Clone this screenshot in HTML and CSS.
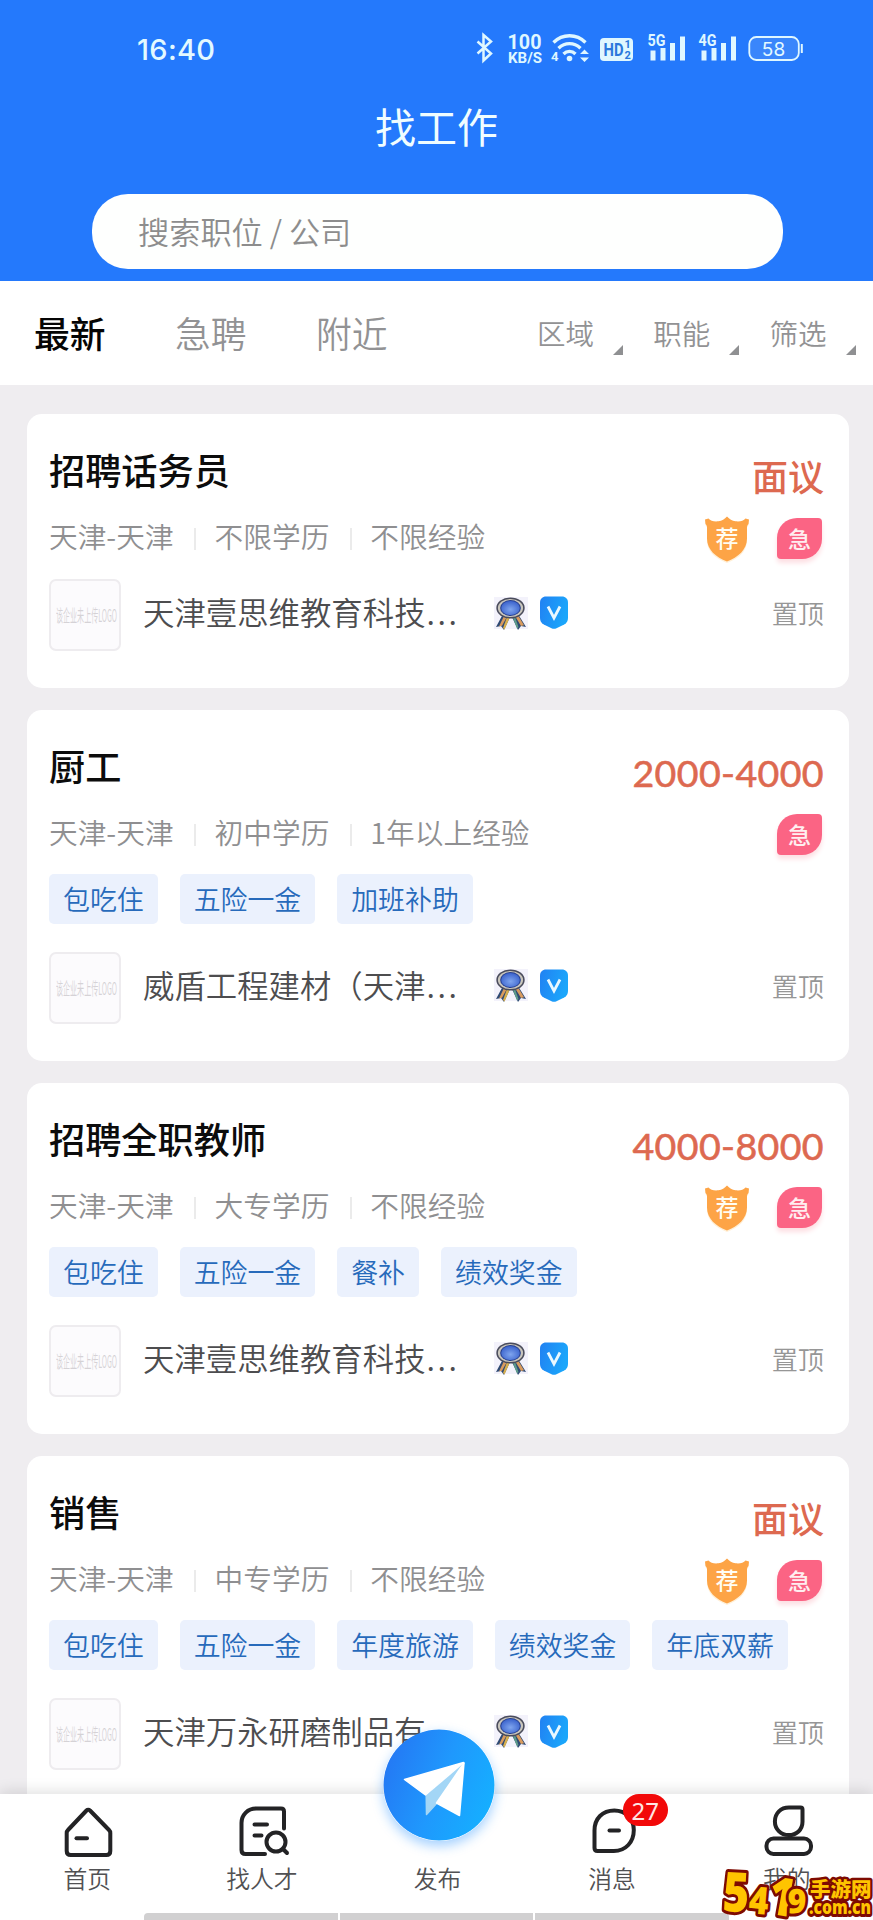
FILE: index.html
```html
<!DOCTYPE html>
<html lang="zh-CN">
<head>
<meta charset="utf-8">
<title>找工作</title>
<link rel="stylesheet" href="styles.css">
</head>
<body>
<svg class="defs" width="0" height="0" aria-hidden="true">
  <defs>
    <linearGradient id="g-v" x1="0" y1="0" x2="1" y2="0.3"><stop offset="0" stop-color="#2181f2"/><stop offset="1" stop-color="#1ba6fb"/></linearGradient>
    <linearGradient id="g-fab" x1="0" y1="0.3" x2="1" y2="0.7"><stop offset="0" stop-color="#2478f4"/><stop offset="0.5" stop-color="#1f98fd"/><stop offset="1" stop-color="#15b0ff"/></linearGradient>
    <radialGradient id="g-medal" cx="0.5" cy="0.6" r="0.6"><stop offset="0" stop-color="#7fa5ee"/><stop offset="1" stop-color="#3a62cc"/></radialGradient>
    <symbol id="medal" viewBox="0 0 34 34">
      <rect width="34" height="32" fill="#f3f2fb"/>
      <path d="M9 17 2 30l5-1 3 4 6-13z" fill="#2f4a73"/><path d="M10 19 5 29.500l3-.7 5-9z" fill="#d99b5e"/><path d="m13 20-4 11 1.500 1.500L16 20z" fill="#d8b04e"/>
      <path d="m24 17 8 13-5-1-3 4-6-13z" fill="#2f4a73"/><path d="m21 19 6 10 3-.7-6-10z" fill="#d99b5e"/><path d="m18.500 20 4.500 11.500 1.500-1.500L21 20z" fill="#5d9b8a"/>
      <ellipse cx="16.500" cy="11" rx="14.200" ry="10.500" fill="#4a4c5c"/>
      <ellipse cx="16.500" cy="11" rx="12.600" ry="9.100" fill="#c9c6bd"/>
      <ellipse cx="16.500" cy="11" rx="10.400" ry="7.900" fill="#27408f"/>
      <ellipse cx="16.500" cy="11" rx="9.300" ry="7" fill="url(#g-medal)"/>
    </symbol>
    <symbol id="verified" viewBox="0 0 28 33">
      <path d="M6 .5h16c3.500 0 6 2.500 6 6V22c0 3-1.200 5-3.800 6.500L16.500 32.200c-1.700.8-3.300.8-5 0L3.800 28.500C1.200 27 0 25 0 22V6.500c0-3.500 2.500-6 6-6z" fill="url(#g-v)"/>
      <path d="m8 10.500 6 11.500 6-11.500" fill="none" stroke="#e9f8ff" stroke-width="2.800"/>
    </symbol>
    <symbol id="shield" viewBox="0 0 46 48">
      <path d="M23 2.500c2.500 2.600 5 4 8.500 4.500 4.500.5 8-.7 10-3.500l3.500.5-.5 5c-1 1-1.500 2-1.500 3.500v12C43 35.500 34 43 23 47 12 43 3 35.500 3 24.500v-12c0-1.500-.5-2.500-1.500-3.500L1 4l3.500-.5c2 2.800 5.500 4 10 3.500 3.500-.5 6-1.900 8.500-4.500z" fill="#fff0d8"/>
      <path d="M23 .5c2.500 2.800 5 4.300 8.500 4.800 4.500.6 8-.5 10-2.800l3.500 1-.5 4.500c-1 1-1.500 2-1.500 3.500v11C43 33.500 34 41.500 23 45.500 12 41.500 3 33.500 3 22.500v-11C3 10 2.500 9 1.500 8L1 3.500l3.500-1c2 2.300 5.500 3.400 10 2.800 3.500-.5 6-2 8.500-4.800z" fill="#fda446"/>
    </symbol>
  </defs>
</svg>
<div class="app">
  <header class="header">
    <div class="status">
      <span class="clock">16:40</span>
      <svg class="status-icons" viewBox="0 0 250 40" width="250" height="40">
        <g fill="none" stroke="#dff7ff" stroke-width="2.500">
          <path d="m4.500 14.500 13.500 12-7.500 7V8l7.500 6.500-13.500 12"/>
        </g>
        <g fill="#dff7ff" class="st-text">
          <text x="34.500" y="21.500" font-size="19.500" textLength="34" lengthAdjust="spacingAndGlyphs">100</text>
          <text x="35" y="35.500" font-size="15.500" textLength="34" lengthAdjust="spacingAndGlyphs">KB/S</text>
          <text x="78" y="34" font-size="13">4</text>
          <circle cx="96.500" cy="31.500" r="2.800"/>
          <path d="m111.500 22.500 4.500 4.500h-9zM111.500 35l4.500-4.500h-9z"/>
        </g>
        <g fill="none" stroke="#dff7ff" stroke-width="3.300">
          <path d="M80.500 15.500c9-9 23-9 32 0M85.500 21.200c6.500-6.200 15.500-6.200 22 0M90.500 27c3.500-3.500 8.500-3.500 12 0"/>
        </g>
        <rect x="127" y="11" width="33" height="23" rx="4" fill="#dff7ff"/>
        <g fill="#2b78dc" class="st-text">
          <text x="130.500" y="29" font-size="18" textLength="20" lengthAdjust="spacingAndGlyphs">HD</text>
          <text x="151.500" y="21" font-size="11">1</text>
          <text x="151.500" y="32" font-size="11">2</text>
        </g>
        <g fill="#dff7ff">
          <path d="M177.500 23.500h5v10h-5zM187.500 21h5v12.500h-5zM197 16h5v17.500h-5zM207 9.500h5v24h-5zM228.500 23.500h5v10h-5zM238.500 21h5v12.500h-5z"/>
        </g>
        <g class="st-text" fill="#dff7ff">
          <text x="174.500" y="19" font-size="16" textLength="18" lengthAdjust="spacingAndGlyphs">5G</text>
          <text x="225.500" y="19" font-size="16" textLength="18" lengthAdjust="spacingAndGlyphs">4G</text>
        </g>
      </svg>
      <svg class="status-power" viewBox="0 0 80 40" width="80" height="40">
        <path d="M-2 16h5v17.500h-5zM8 9.500h5v24H8z" fill="#dff7ff"/>
        <rect x="26.300" y="10" width="49.500" height="23" rx="7" fill="#3a86fb" stroke="#dff7ff" stroke-width="1.800"/>
        <path d="M78.800 17v9" stroke="#dff7ff" stroke-width="2"/>
      </svg>
      <span class="battery">58</span>
    </div>
    <h1 class="title">找工作</h1>
    <div class="search">搜索职位 / 公司</div>
  </header>

  <nav class="tabs">
    <span class="tab tab-on">最新</span>
    <span class="tab">急聘</span>
    <span class="tab">附近</span>
    <div class="filters">
      <span class="filter">区域</span>
      <span class="filter">职能</span>
      <span class="filter">筛选</span>
    </div>
  </nav>

  <main class="list">
    <article class="card">
      <div class="head"><h2 class="job">招聘话务员</h2><span class="pay pay-cn">面议</span></div>
      <div class="meta"><span>天津-天津</span><span>不限学历</span><span>不限经验</span>
        <div class="flags"><b class="flag rec"><svg><use href="#shield"/></svg><i>荐</i></b><b class="flag urgent"><i>急</i></b></div></div>
      <div class="company"><div class="logo"><em>该企业未上传LOGO</em></div><span class="name">天津壹思维教育科技<i class="dots">...</i></span><svg class="medal"><use href="#medal"/></svg><svg class="verified"><use href="#verified"/></svg><span class="top">置顶</span></div>
    </article>

    <article class="card">
      <div class="head"><h2 class="job">厨工</h2><span class="pay">2000-4000</span></div>
      <div class="meta"><span>天津-天津</span><span>初中学历</span><span>1年以上经验</span>
        <div class="flags"><b class="flag urgent"><i>急</i></b></div></div>
      <div class="tags"><span>包吃住</span><span>五险一金</span><span>加班补助</span></div>
      <div class="company"><div class="logo"><em>该企业未上传LOGO</em></div><span class="name">威盾工程建材（天津<i class="dots">...</i></span><svg class="medal"><use href="#medal"/></svg><svg class="verified"><use href="#verified"/></svg><span class="top">置顶</span></div>
    </article>

    <article class="card">
      <div class="head"><h2 class="job">招聘全职教师</h2><span class="pay">4000-8000</span></div>
      <div class="meta"><span>天津-天津</span><span>大专学历</span><span>不限经验</span>
        <div class="flags"><b class="flag rec"><svg><use href="#shield"/></svg><i>荐</i></b><b class="flag urgent"><i>急</i></b></div></div>
      <div class="tags"><span>包吃住</span><span>五险一金</span><span>餐补</span><span>绩效奖金</span></div>
      <div class="company"><div class="logo"><em>该企业未上传LOGO</em></div><span class="name">天津壹思维教育科技<i class="dots">...</i></span><svg class="medal"><use href="#medal"/></svg><svg class="verified"><use href="#verified"/></svg><span class="top">置顶</span></div>
    </article>

    <article class="card">
      <div class="head"><h2 class="job">销售</h2><span class="pay pay-cn">面议</span></div>
      <div class="meta"><span>天津-天津</span><span>中专学历</span><span>不限经验</span>
        <div class="flags"><b class="flag rec"><svg><use href="#shield"/></svg><i>荐</i></b><b class="flag urgent"><i>急</i></b></div></div>
      <div class="tags"><span>包吃住</span><span>五险一金</span><span>年度旅游</span><span>绩效奖金</span><span>年底双薪</span></div>
      <div class="company"><div class="logo"><em>该企业未上传LOGO</em></div><span class="name">天津万永研磨制品有</span><svg class="medal"><use href="#medal"/></svg><svg class="verified"><use href="#verified"/></svg><span class="top">置顶</span></div>
    </article>
  </main>

  <footer class="nav">
    <a class="item">
      <svg class="icon" viewBox="0 0 60 60"><path d="M33 11.500 52 31c1 1 1.300 1.700 1.300 3v18c0 2.500-1.500 4-4 4H13.700c-2.500 0-4-1.500-4-4V34c0-1.300.3-2 1.300-3l18.500-19.500c1-1.100 2.500-1.100 3.500 0z"/><path d="M19.500 39.300h10.500"/></svg>
      <span>首页</span>
    </a>
    <a class="item">
      <svg class="icon" viewBox="0 0 60 60"><path d="M52 29.500V12.500c0-2-1-3-3-3H24c-8 0-14.500 6-14.500 14.500v27c0 2.500 1.500 4 4 4H33"/><path d="M22.500 25.500H35M22.500 36.500h7"/><circle cx="44" cy="43" r="9.500"/><path d="m51 50 4 4"/></svg>
      <span>找人才</span>
    </a>
    <a class="item publish">
      <span>发布</span>
      <svg class="fab" viewBox="0 0 112 112"><circle cx="56" cy="56" r="55.500" fill="url(#g-fab)"/><g stroke-width="1.500" stroke-linejoin="round"><path d="M43.200 67 81 34 54 74 43.500 85.500z" fill="#a3d6f6" stroke="#a3d6f6"/><path d="M81 34 76.500 86.500 53.500 74z" fill="#fff" stroke="#fff"/><path d="M21.500 50.500 80.500 33.500 42.500 66z" fill="#fff" stroke="#fff"/></g></svg>
    </a>
    <a class="item message">
      <svg class="icon" viewBox="0 0 60 60"><path d="M30.300 11.500c11.500 0 19.500 8.500 19.500 19.500 0 12-8 21-20 21H13.500c-2 0-3-1-3-3V31.500c0-12 8-20 19.800-20z"/><path d="M25.500 31.500h9.500"/></svg>
      <span>消息</span>
      <em class="count">27</em>
    </a>
    <a class="item mine">
      <svg class="icon" viewBox="0 0 60 60"><path d="M45.500 10.500v12.300c0 8-6 13.300-13.800 13.300-8 0-13.800-6-13.800-13.500 0-8.500 6-14.100 14-14.100h11.600c1.300 0 2 .7 2 2z"/><rect x="9.500" y="39.500" width="44.500" height="15.500" rx="7"/></svg>
      <span>我的</span>
    </a>
    <div class="gesture"><i></i><i></i><i></i></div>
  </footer>

  <svg class="stamp" viewBox="0 0 160 60" width="160" height="60">
    <g class="stamp-text">
      <text transform="translate(9 51) rotate(3) scale(.82 1)" font-size="55">5</text>
      <text transform="translate(35 53) rotate(5) scale(.88 1)" font-size="38">4</text>
      <text transform="translate(53 53) rotate(10) scale(.85 1)" font-size="53">1</text>
      <text transform="translate(74 53) rotate(2) scale(.95 1)" font-size="34">9</text>
      <text class="stamp-cn" x="97" y="37" font-size="20.500">手游网</text>
      <text x="96" y="54" font-size="20" textLength="62" lengthAdjust="spacingAndGlyphs">.com.cn</text>
    </g>
  </svg>
</div>
</body>
</html>
```
FILE: styles.css
```css
* { box-sizing: border-box; margin: 0; padding: 0; }
i, em { font-style: normal; }
body {
  font-family: "Noto Sans CJK SC", sans-serif;
  font-weight: 350;
  background: #efedf0;
}
.defs { position: absolute; }
.app {
  position: relative;
  display: flex;
  flex-direction: column;
  width: 873px;
  height: 1920px;
  overflow: hidden;
}

/* header */
.header { height: 281px; background: #2479fc; color: #f0fdff; }
.status { display: flex; height: 93px; padding: 27px 0 0 137px; line-height: 46px; position: relative; }
.clock { width: 336px; font: 500 29px/46px Inter, sans-serif; letter-spacing: .3px; color: #e3f9ff; }
.status-icons { flex: none; width: 250px; height: 40px; }
.status-power { flex: none; width: 80px; height: 40px; overflow: visible; }
.battery { position: absolute; left: 748px; width: 51px; top: 36px; text-align: center; font: 400 19px/27px Inter, sans-serif; color: #e3f9ff; }
.st-text { font-family: Roboto, sans-serif; font-weight: 700; }
.title { height: 64px; line-height: 65px; text-align: center; font-size: 41px; font-weight: 400; }
.search {
  width: 691px; height: 75px; margin: 37px 0 0 92px; padding-left: 46px;
  border-radius: 36px; background: #fefffe;
  color: #8d8d8d; font-size: 31.200px; line-height: 73px;
}

/* tabs */
.tabs { display: flex; height: 104px; padding-left: 34px; background: #fff; line-height: 103px; color: #929294; }
.tab { flex: none; width: 141px; font-size: 35.800px; }
.tab-on { font-weight: 500; color: #050505; }
.filters { display: flex; flex: none; margin-left: 80px; line-height: 104px; }
.filter { position: relative; flex: none; width: 116.300px; font-size: 28.500px; }
.filter:last-child { width: 92px; }
.filter::after {
  content: ""; position: absolute; left: 76px; top: 64px;
  border: 5px solid; border-color: transparent #8f9092 #8f9092 transparent;
}

/* job cards */
.list { flex: 1; min-height: 0; overflow: hidden; display: flex; flex-direction: column; gap: 22px; padding: 29px 24px 0 27px; }
.card { flex: none; padding: 35px 25px 37px 22px; border-radius: 15px; background: #fff; }
.card:first-child { padding-bottom: 36.500px; }
.head { display: flex; justify-content: space-between; height: 40px; line-height: 40px; }
.job { font-size: 36.200px; font-weight: 500; color: #0c0c0c; }
.pay { margin-top: 8px; font: 400 37.500px/40px Lato, sans-serif; color: #dd6950; letter-spacing: .4px; -webkit-text-stroke: .6px #dd6950; }
.pay-cn { margin-top: 6px; font: 500 36px/40px "Noto Sans CJK SC", sans-serif; letter-spacing: 0; -webkit-text-stroke: 0; }
.meta { display: flex; height: 40px; margin-top: 27px; font-size: 28.700px; line-height: 40px; color: #8f8f91; }
.meta > span + span { margin-left: 20.500px; padding-left: 20.500px; background: linear-gradient(#ebebeb, #ebebeb) 0 12px / 2px 22px no-repeat; }
.flags { display: flex; gap: 27px; margin: 0 0 0 auto; }
.flag { position: relative; width: 46px; height: 48px; font-size: 23px; font-weight: 500; line-height: 43px; text-align: center; color: #fffdf3; }
.flag svg { position: absolute; left: 0; top: 0; width: 46px; height: 48px; }
.flag i { position: relative; }
.urgent { height: 41px; width: 45px; margin: 2px 2px 0 0; border-radius: 20px 4px 20px 4px; background: #fb6484; line-height: 40px; color: #ffeef0; box-shadow: 0 4px 5px #fddfe3; }
.tags { display: flex; gap: 22px; margin-top: 22.500px; }
.tags span { height: 50px; padding: 0 14px; border-radius: 5px; background: #ebf1fd; color: #276abb; font-size: 26.900px; line-height: 50px; }
.company { display: flex; align-items: center; height: 72px; margin-top: 23px; }
.tags + .company { margin-top: 27.500px; }
.logo { width: 72px; height: 72px; border: 2px solid #eeecef; border-radius: 7px; background: #fcfbfd; overflow: hidden; }
.logo em { display: block; width: 132px; transform: scale(.44, 1.1); transform-origin: 0 50%; margin: 20px 0 0 5px; font-size: 16px; line-height: 26px; color: #d5d2d6; white-space: nowrap; }
.name { width: 351px; padding-left: 22px; font-size: 31.400px; line-height: 72px; margin-top: -6px; color: #4d4d4f; white-space: nowrap; }
.dots { letter-spacing: 2.500px; margin-left: 1px; }
.medal { width: 34px; height: 34px; margin: -3px 0 0 22px; }
.verified { width: 28px; height: 33px; margin: -5px 0 0 12px; }
.top { margin-left: auto; font-size: 26.200px; line-height: 72px; margin-top: -4px; color: #969696; }

/* bottom bar */
.nav { position: relative; display: grid; grid-template-columns: repeat(5, 1fr); height: 126px; background: #fff; box-shadow: 0 -2px 14px #0002; }
.item { position: relative; display: flex; flex-direction: column; align-items: center; justify-content: flex-end; height: 102px; color: #515153; font-size: 23.800px; line-height: 36px; }
.icon { width: 60px; height: 60px; margin-bottom: 1px; fill: none; stroke: #232325; stroke-width: 4; stroke-linecap: round; stroke-linejoin: round; }
.message .icon { margin-left: 6px; }
.message > span, .mine > span, .publish > span { margin-left: 2px; }
.mine .icon { margin-left: 3px; }
.fab { position: absolute; left: 34px; top: -65px; width: 112px; height: 112px; border-radius: 50%; box-shadow: 0 5px 12px #1f8dff66; }
.count { position: absolute; left: 99px; top: 0; width: 45px; height: 32px; border-radius: 16px; background: #f20909; color: #ffe6e4; font: 400 24px/33px "Noto Sans", sans-serif; text-align: center; }
.gesture { position: absolute; left: 144px; bottom: 0; display: flex; gap: 2px; width: 585px; height: 7px; }
.gesture i { flex: 1; background: #d1d0d1; }
.gesture i:first-child { border-radius: 4px 0 0 0; }
.gesture i:last-child { border-radius: 0 4px 0 0; }

/* site stamp */
.stamp { position: absolute; left: 713px; top: 1860px; }
.stamp-text { font-family: "Open Sans", sans-serif; font-weight: 800; fill: #ffc400; stroke: #7e0b02; stroke-width: 6px; stroke-linejoin: round; paint-order: stroke; }
.stamp-cn { font-family: "Noto Sans CJK SC", sans-serif; stroke-width: 5px; }
```
